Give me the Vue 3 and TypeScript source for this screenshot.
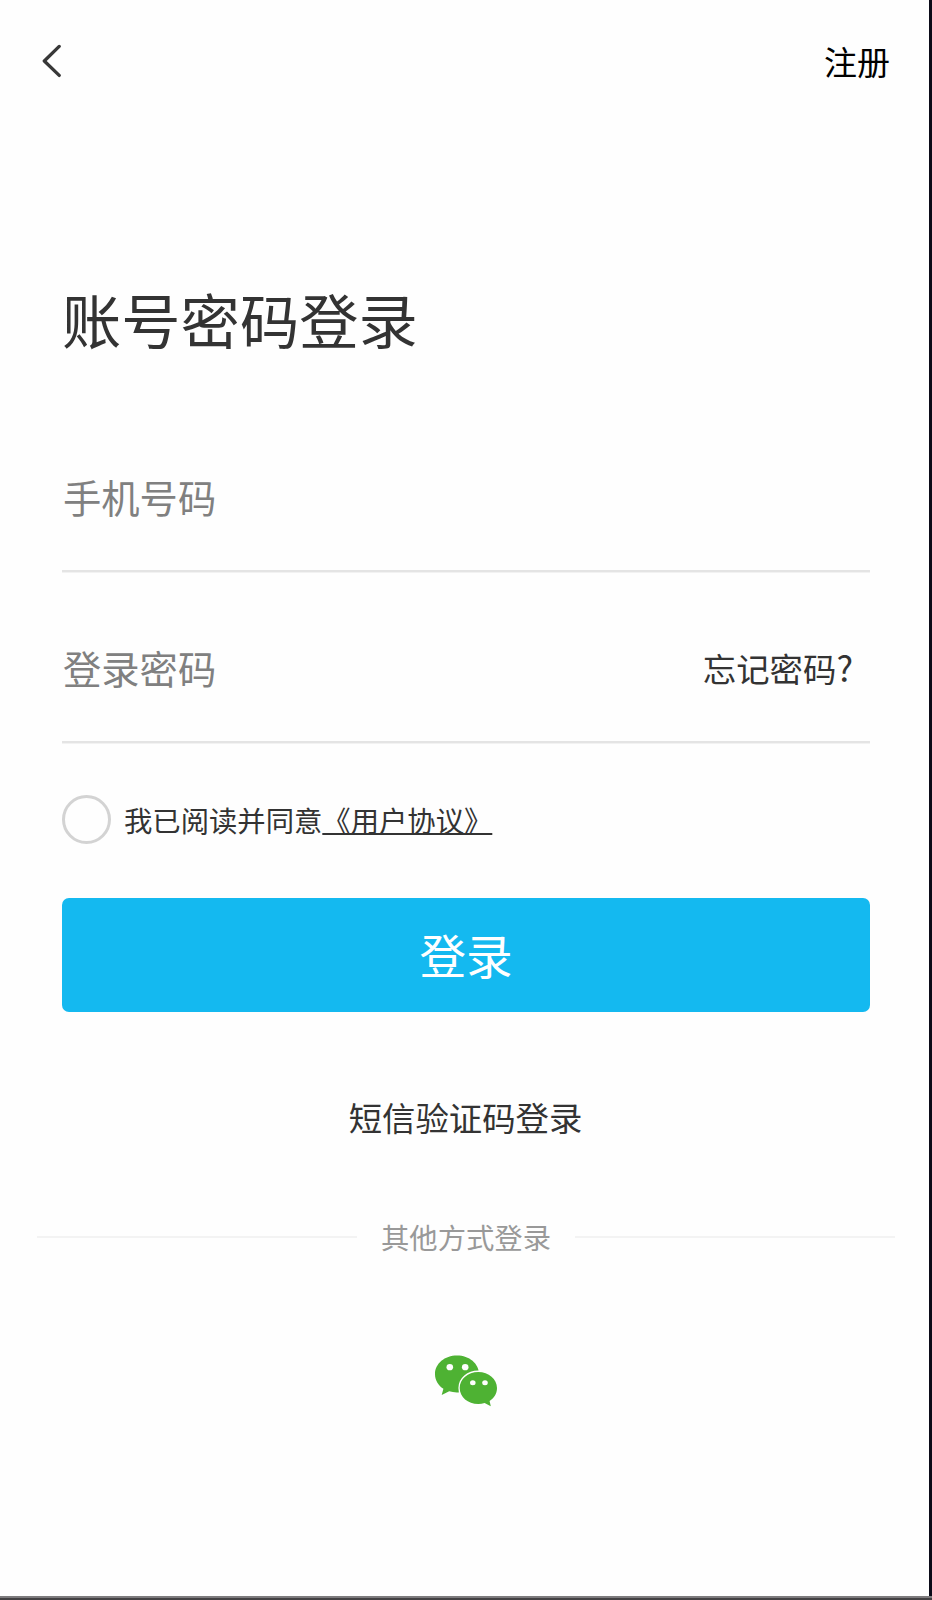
<script setup lang="ts">
import { ref } from 'vue'

const phone = ref('')
const password = ref('')
const agreed = ref(false)
</script>

<template>
  <div class="screen">
    <main class="page">
      <header class="top">
        <button class="back" type="button" aria-label="返回">
          <svg width="20" height="34" viewBox="0 0 20 34">
            <path d="M17.2 2.4 2.3 17 17.2 31.4" fill="none" stroke="#383838" stroke-width="3.3" stroke-linecap="round" stroke-linejoin="round" />
          </svg>
        </button>
        <a class="register">注册</a>
      </header>

      <form class="form" @submit.prevent>
        <h1 class="title">账号密码登录</h1>
        <div class="field">
          <input v-model="phone" class="input" type="text" placeholder="手机号码" />
        </div>
        <div class="field second">
          <input v-model="password" class="input" type="password" placeholder="登录密码" />
          <a class="forgot">忘记密码<span class="mark">?</span></a>
        </div>
        <div class="agreement">
          <button class="check" :class="{ on: agreed }" type="button" aria-label="同意" @click="agreed = !agreed"></button>
          <span>我已阅读并同意<a class="terms">《用户协议》</a></span>
        </div>
        <button class="submit" type="submit">登录</button>
      </form>

      <a class="sms">短信验证码登录</a>
      <div class="others"><span>其他方式登录</span></div>

      <button class="wechat" type="button" aria-label="微信">
        <svg width="62" height="52" viewBox="0 0 62 52">
          <path d="M22 .6C9.8.6 0 8.7 0 19.2c0 6 3.3 11.2 8.4 14.5L6.7 40l7.5-3.7c2.6.8 5.5 1.2 8.6 1.1C34.9 37.3 44 29.2 44 19.2 44 8.7 34.2.6 22 .6Z" fill="#4eb233" />
          <path d="M43.3 16.9c-10.4 0-18.6 7.1-18.6 16.1s8.2 16 18.6 16c2.2 0 4.3-.3 6.3-.9l6.2 3.2-1.2-5.4c4.6-3 7.4-7.4 7.4-12.9 0-9-8.3-16.1-18.7-16.1Z" fill="#4eb233" stroke="#fefefe" stroke-width="2.6" paint-order="stroke" />
          <g fill="#fefefe">
            <ellipse cx="14.8" cy="12.2" rx="3.3" ry="3.1" />
            <ellipse cx="30.2" cy="12.2" rx="3.3" ry="3.1" />
            <ellipse cx="37.8" cy="27.7" rx="2.8" ry="2.5" />
            <ellipse cx="50" cy="27.7" rx="2.8" ry="2.5" />
          </g>
        </svg>
      </button>
    </main>
    <div class="bottom-edge"></div>
  </div>
</template>

<style>
body {
  margin: 0;
}
</style>

<style scoped>
.screen {
  display: flex;
  flex-direction: column;
  width: 932px;
  height: 1600px;
  overflow: hidden;
  background: #0b0b18;
  color: #333;
  font-family: "Noto Sans CJK SC", sans-serif;
}
.page {
  display: flex;
  flex: 1;
  flex-direction: column;
  width: 929px;
  background: #fefefe;
}
.bottom-edge {
  height: 2px;
  border-top: 2px solid #7d7b7d;
  background: #434143;
}
button {
  padding: 0;
  border: 0;
  background: none;
  color: inherit;
  font: inherit;
}
.top {
  display: flex;
  align-items: center;
  justify-content: space-between;
  height: 122px;
  padding: 0 39px 0 42px;
}
.back,
.wechat {
  display: block;
  line-height: 0;
}
.register {
  color: #000;
  font-size: 33px;
  line-height: 40px;
}
.form {
  display: flex;
  flex-direction: column;
  width: 808px;
  padding: 158px 0 0 62px;
}
.title {
  margin: 0;
  font-size: 59.3px;
  font-weight: 400;
  line-height: 76px;
}
.field {
  display: flex;
  align-items: center;
  box-sizing: border-box;
  height: 146px;
  margin-top: 70px;
  border-bottom: 2px solid #e4e4e4;
  box-shadow: 0 1px #f2f2f2;
}
.field.second {
  margin-top: 25px;
}
.input {
  flex: 1;
  min-width: 0;
  height: 60px;
  margin-bottom: 4px;
  padding: 0 0 0 1px;
  border: 0;
  outline: 0;
  background: none;
  color: #333;
  font-family: inherit;
  font-size: 38.3px;
}
.input::placeholder {
  color: #808080;
  opacity: 1;
}
.forgot {
  margin: 0 17px 2px 0;
  font-size: 33.4px;
  line-height: 40px;
}
.mark {
  font-size: 35px;
  line-height: 1;
}
.agreement {
  display: flex;
  align-items: center;
  gap: 13px;
  height: 49px;
  margin-top: 52px;
  font-size: 28.33px;
  line-height: 40px;
}
.check {
  box-sizing: border-box;
  width: 49px;
  height: 49px;
  border: 3px solid #d3d3d3;
  border-radius: 50%;
}
.check.on {
  background: #14b9f0;
}
.terms {
  text-decoration: underline;
  text-decoration-thickness: 2px;
  text-decoration-skip-ink: none;
}
.submit {
  height: 114px;
  margin-top: 54px;
  padding-bottom: 4px;
  border-radius: 7px;
  background: #14b9f0;
  color: #fff;
  font-size: 46.6px;
}
.sms {
  align-self: center;
  margin: 85px 0 0 2px;
  font-size: 33.4px;
  line-height: 40px;
}
.others {
  display: flex;
  align-items: center;
  gap: 24px;
  margin: 80px 34px 0 37px;
  color: #999;
  font-size: 28.33px;
  line-height: 40px;
}
.others::before,
.others::after {
  flex: 1;
  height: 2px;
  background: #f3f3f3;
  content: "";
}
.wechat {
  align-self: center;
  margin: 98px 0 0 3px;
}
</style>
